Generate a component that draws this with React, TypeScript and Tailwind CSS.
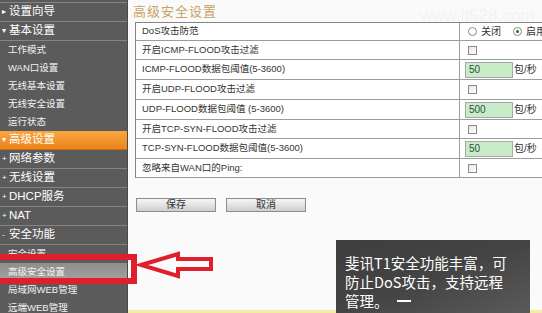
import React from "react";

function MainItem({ glyph, label, active }: { glyph: string; label: string; active?: boolean }) {
  return (
    <div
      className={
        "h-[19px] shrink-0 flex items-center border-b text-white text-[11.5px] leading-none " +
        (active
          ? "bg-gradient-to-b from-[#f7a642] to-[#ec8416] border-[#c86c10]"
          : "border-[#848484]")
      }
    >
      <span className="w-[9px] pl-[2px] text-[8px] leading-none text-white">{glyph}</span>
      <span>{label}</span>
    </div>
  );
}

function SubItem({ label, active }: { label: string; active?: boolean }) {
  return (
    <div
      className={
        "h-[18px] shrink-0 flex items-center pl-[8px] text-[9.5px] leading-none text-[#f2f2f2] " +
        (active ? "bg-gradient-to-b from-[#8e8e8e] to-[#a2a2a2]" : "")
      }
    >
      {label}
    </div>
  );
}

function Check() {
  return <span className="block w-[9px] h-[9px] border border-[#8a8a8a] bg-gradient-to-br from-[#e6e6e6] to-white" />;
}

function NumInput({ value }: { value: string }) {
  return (
    <div className="flex items-center">
      <div className="w-[48px] h-[16px] bg-[#c8ecc8] border border-[#a8a8a8] flex items-center pl-[3px] text-[10px] text-[#2f4f3f]">
        {value}
      </div>
      <span className="ml-[1px] text-[10px] text-[#333]">包/秒</span>
    </div>
  );
}

function Row({ h, label, children }: { h: string; label: string; children: React.ReactNode }) {
  return (
    <div className={"flex border-b border-[#9c9c9c] " + h}>
      <div className="w-[324px] shrink-0 border-r border-[#9c9c9c] flex items-center pl-[6px] text-[9.5px] text-[#333] whitespace-nowrap">
        {label}
      </div>
      <div className="flex items-center pl-[8px] gap-[4px]">{children}</div>
    </div>
  );
}

export default function App() {
  return (
    <div className="relative w-[542px] h-[313px] overflow-hidden flex bg-[#fafafa] font-['Liberation_Sans','Noto_Sans_CJK_SC',sans-serif]">
      <aside className="w-[128px] shrink-0 bg-[#5b5b5b] border-r border-[#4a4a4a] flex flex-col">
        <div className="h-[3px] shrink-0 border-b border-[#848484]" />
        <MainItem glyph="▸" label="设置向导" />
        <MainItem glyph="▾" label="基本设置" />
        <SubItem label="工作模式" />
        <SubItem label="WAN口设置" />
        <SubItem label="无线基本设置" />
        <SubItem label="无线安全设置" />
        <SubItem label="运行状态" />
        <MainItem glyph="▾" label="高级设置" active />
        <MainItem glyph="+" label="网络参数" />
        <MainItem glyph="+" label="无线设置" />
        <MainItem glyph="+" label="DHCP服务" />
        <MainItem glyph="+" label="NAT" />
        <MainItem glyph="-" label="安全功能" />
        <SubItem label="安全设置" />
        <SubItem label="高级安全设置" active />
        <SubItem label="局域网WEB管理" />
        <SubItem label="远端WEB管理" />
      </aside>

      <main className="flex-1 flex flex-col pl-[5px] pt-[3px]">
        <h1 className="h-[19px] text-[13px] leading-[16px] tracking-[1px] text-[#c8a266] font-['Noto_Sans_CJK_SC',sans-serif]">
          高级安全设置
        </h1>
        <div className="ml-[2px] w-[430px] border-t border-l border-[#858585] bg-white">
          <Row h="h-[18px]" label="DoS攻击防范">
            <span className="w-[9px] h-[9px] rounded-full border border-[#8a8a8a] bg-white" />
            <span className="text-[10px] text-[#333] mr-[8px]">关闭</span>
            <span className="w-[9px] h-[9px] rounded-full border border-[#8a8a8a] bg-white flex items-center justify-center">
              <span className="w-[3px] h-[3px] rounded-full bg-[#2a6a2a]" />
            </span>
            <span className="text-[10px] text-[#333]">启用</span>
          </Row>
          <Row h="h-[19px]" label="开启ICMP-FLOOD攻击过滤">
            <Check />
          </Row>
          <Row h="h-[20px]" label="ICMP-FLOOD数据包阈值(5-3600)">
            <span className="-ml-[3px]"><NumInput value="50" /></span>
          </Row>
          <Row h="h-[20px]" label="开启UDP-FLOOD攻击过滤">
            <Check />
          </Row>
          <Row h="h-[20px]" label="UDP-FLOOD数据包阈值  (5-3600)">
            <span className="-ml-[3px]"><NumInput value="500" /></span>
          </Row>
          <Row h="h-[19px]" label="开启TCP-SYN-FLOOD攻击过滤">
            <Check />
          </Row>
          <Row h="h-[20px]" label="TCP-SYN-FLOOD数据包阈值(5-3600)">
            <span className="-ml-[3px]"><NumInput value="50" /></span>
          </Row>
          <Row h="h-[19px]" label="忽略来自WAN口的Ping:">
            <Check />
          </Row>
        </div>
        <div className="flex gap-[10px] ml-[3px] mt-[20px]">
          <button className="w-[80px] h-[14px] border border-[#8c8c8c] bg-gradient-to-b from-[#f6f6f6] to-[#cfcfcf] text-[10px] leading-none text-[#333]">
            保存
          </button>
          <button className="w-[80px] h-[14px] border border-[#8c8c8c] bg-gradient-to-b from-[#f6f6f6] to-[#cfcfcf] text-[10px] leading-none text-[#333]">
            取消
          </button>
        </div>
      </main>

      <div className="absolute left-[420px] top-[3px] text-[17px] text-[#f3f3f3] font-['Liberation_Sans',sans-serif]">
        www.it528.com
      </div>

      <div className="absolute left-[128px] right-0 bottom-0 h-[3px] bg-[#f4eea0]" />

      <div className="absolute left-[-6px] top-[254px] w-[143px] h-[30px] border-[6px] border-[#e01e2c]" />

      <svg className="absolute left-[136px] top-[250px]" width="80" height="32" viewBox="136 250 80 32">
        <polygon
          points="141,265 178,254 178,259 211,259 211,269 178,269 178,276"
          fill="#fafafa"
          stroke="#e01e2c"
          strokeWidth="4"
          strokeLinejoin="miter"
        />
      </svg>

      <div className="absolute left-[336px] top-[240px] w-[194px] h-[73px] bg-gradient-to-br from-[#3e3e3e] via-[#444] to-[#5a5a5a] pl-[9px] pt-[13px] text-white text-[14.5px] leading-[19px] font-['Noto_Sans_CJK_SC',sans-serif]">
        <div className="whitespace-nowrap">斐讯T1安全功能丰富，可</div>
        <div className="whitespace-nowrap">防止DoS攻击，支持远程</div>
        <div className="flex items-center">
          <span>管理。</span>
          <span className="ml-[8px] w-[14px] h-[2px] bg-white" />
        </div>
      </div>
    </div>
  );
}
